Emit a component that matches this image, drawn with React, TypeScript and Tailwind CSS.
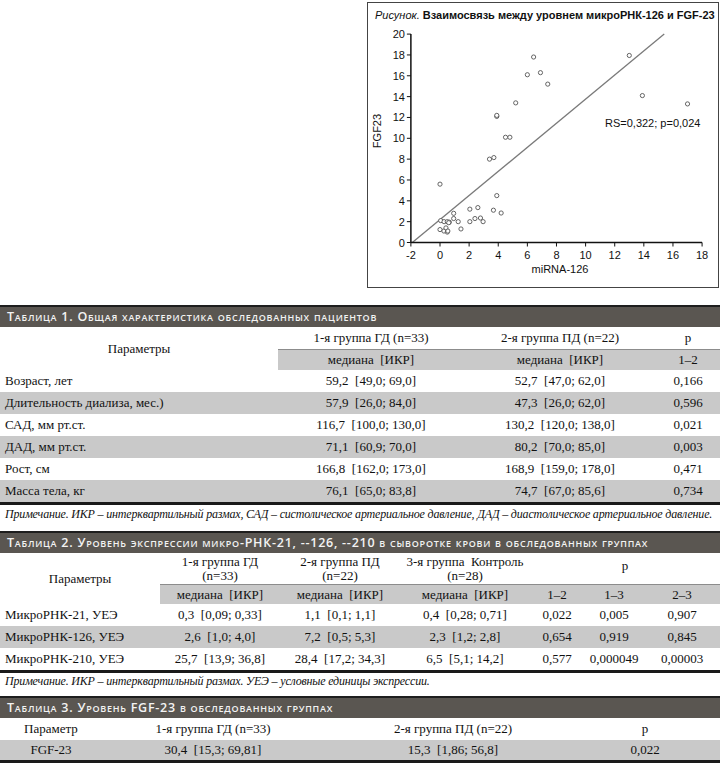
import React from "react";

const sx = (v: number) => 440 + v * 14.56;
const sy = (v: number) => 242.5 - v * 10.42;

const points: [number, number][] = [
  [6.43, 17.8], [13, 17.95], [6.0, 16.1], [6.9, 16.3], [7.4, 15.2], [13.9, 14.1],
  [5.2, 13.4], [17.0, 13.3], [3.9, 12.1], [3.9, 12.2], [4.5, 10.1], [4.8, 10.1],
  [3.4, 8.0], [3.7, 8.15], [0.0, 5.6], [3.9, 4.5], [2.05, 3.2], [2.6, 3.35],
  [3.67, 3.1], [4.2, 2.83], [0.94, 2.8], [0.94, 2.3], [1.25, 2.0], [0.05, 2.1],
  [0.28, 2.0], [0.5, 2.0], [0.64, 1.95], [2.05, 2.0], [2.4, 2.3], [2.78, 2.35],
  [2.96, 2.0], [0.0, 1.24], [0.27, 1.1], [0.41, 1.4], [0.5, 1.0], [0.54, 1.1],
  [1.44, 1.3], [0.6, 1.9],
];

function Chart() {
  const yTicks = [0, 2, 4, 6, 8, 10, 12, 14, 16, 18, 20];
  const xTicks = [-2, 0, 2, 4, 6, 8, 10, 12, 14, 16, 18];
  return (
    <svg width={350} height={260} viewBox="368 27 350 260" className="block">
      <g fontFamily="'Liberation Sans', Arial, sans-serif" fontSize={11} fill="#111">
        <line x1={sx(-1.9)} y1={sy(0)} x2={sx(15.4)} y2={sy(20)} stroke="#7a7a7a" strokeWidth={1.3} />
        <line x1={sx(-2)} y1={sy(20)} x2={sx(-2)} y2={sy(0)} stroke="#111" strokeWidth={1.5} />
        <line x1={sx(-2)} y1={sy(0)} x2={sx(18)} y2={sy(0)} stroke="#111" strokeWidth={1.5} />
        {yTicks.map((t) => (
          <g key={"y" + t}>
            <line x1={sx(-2) - 4} y1={sy(t)} x2={sx(-2)} y2={sy(t)} stroke="#111" strokeWidth={1} />
            <text x={sx(-2) - 6} y={sy(t) + 4} textAnchor="end">{t}</text>
          </g>
        ))}
        {xTicks.map((t) => (
          <g key={"x" + t}>
            <line x1={sx(t)} y1={sy(0)} x2={sx(t)} y2={sy(0) + 4} stroke="#111" strokeWidth={1} />
            <text x={sx(t)} y={sy(0) + 16} textAnchor="middle">{t}</text>
          </g>
        ))}
        <text x={560} y={273} textAnchor="middle">miRNA-126</text>
        <text x={381} y={131} textAnchor="middle" transform="rotate(-90 381 131)">FGF23</text>
        <text x={605} y={127}>RS=0,322; p=0,024</text>
        {points.map(([x, y], i) => (
          <circle key={i} cx={sx(x)} cy={sy(y)} r={2.1} fill="#fff" stroke="#555" strokeWidth={0.9} />
        ))}
      </g>
    </svg>
  );
}

function Bar({ children }: { children: React.ReactNode }) {
  return (
    <div className="h-[22px] bg-[#5a5651] border-t-2 border-[#1e1e1e] flex items-center pl-[7px] text-[#f3f3f3] text-[12.5px] font-semibold tracking-[0.06em] [font-variant:small-caps] font-['Open_Sans',sans-serif] leading-none whitespace-nowrap">
      {children}
    </div>
  );
}

const serif = "font-['Liberation_Serif',serif] text-[13px] text-[#111]";
const gray = "bg-[#c9c9c9]";
const note = "pl-[5px] italic text-[12px] tracking-[-0.015em] leading-[14px] whitespace-nowrap";

const t1cols = "grid grid-cols-[278px_186px_192px_64px]";
const t1rows: [string, string, string, string][] = [
  ["Возраст, лет", "59,2  [49,0; 69,0]", "52,7  [47,0; 62,0]", "0,166"],
  ["Длительность диализа, мес.)", "57,9  [26,0; 84,0]", "47,3  [26,0; 62,0]", "0,596"],
  ["САД, мм рт.ст.", "116,7  [100,0; 130,0]", "130,2  [120,0; 138,0]", "0,021"],
  ["ДАД, мм рт.ст.", "71,1  [60,9; 70,0]", "80,2  [70,0; 85,0]", "0,003"],
  ["Рост, см", "166,8  [162,0; 173,0]", "168,9  [159,0; 178,0]", "0,471"],
  ["Масса тела, кг", "76,1  [65,0; 83,8]", "74,7  [67,0; 85,6]", "0,734"],
];

const t2cols = "grid grid-cols-[160px_120px_120px_130px_54px_60px_76px]";
const t2rows: string[][] = [
  ["МикроРНК-21, УЕЭ", "0,3  [0,09; 0,33]", "1,1  [0,1; 1,1]", "0,4  [0,28; 0,71]", "0,022", "0,005", "0,907"],
  ["МикроРНК-126, УЕЭ", "2,6  [1,0; 4,0]", "7,2  [0,5; 5,3]", "2,3  [1,2; 2,8]", "0,654", "0,919", "0,845"],
  ["МикроРНК-210, УЕЭ", "25,7  [13,9; 36,8]", "28,4  [17,2; 34,3]", "6,5  [5,1; 14,2]", "0,577", "0,000049", "0,00003"],
];

const t3cols = "grid grid-cols-[102px_222px_258px_126px_12px]";

export default function App() {
  return (
    <div className={"w-[720px] h-[765px] bg-white overflow-hidden " + serif}>
      <div className="flex justify-end pr-[1px] pt-[2px]">
        <div className="w-[352px] h-[286px] border border-[#444] flex flex-col">
          <div className="h-[24px] pl-[7px] flex items-center text-[11px] text-[#111] font-['Liberation_Sans',sans-serif] whitespace-nowrap">
            <span className="italic">Рисунок.</span>
            <span className="font-bold ml-[3px]">Взаимосвязь между уровнем микроРНК-126 и FGF-23</span>
          </div>
          <Chart />
        </div>
      </div>

      {/* Table 1 */}
      <div className="mt-[17px]">
        <Bar>Таблица 1. Общая характеристика обследованных пациентов</Bar>
        <div className={t1cols}>
          <div className="row-span-2 flex items-center justify-center">Параметры</div>
          <div className="h-[22px] flex items-center justify-center">1-я группа ГД (n=33)</div>
          <div className="h-[22px] flex items-center justify-center">2-я группа ПД (n=22)</div>
          <div className="h-[22px] flex items-center justify-center">р</div>
          <div className={"h-[21px] flex items-center justify-center whitespace-pre border-t border-[#8c8c8c] " + gray}>медиана  [ИКР]</div>
          <div className={"h-[21px] flex items-center justify-center whitespace-pre border-t border-[#8c8c8c] " + gray}>медиана  [ИКР]</div>
          <div className={"h-[21px] flex items-center justify-center border-t border-[#8c8c8c] " + gray}>1–2</div>
        </div>
        {t1rows.map((r, i) => (
          <div key={i} className={t1cols + " h-[22px] items-center " + (i % 2 === 1 ? gray : "")}>
            <div className="pl-[5px] whitespace-nowrap">{r[0]}</div>
            <div className="text-center whitespace-pre">{r[1]}</div>
            <div className="text-center whitespace-pre">{r[2]}</div>
            <div className="text-center">{r[3]}</div>
          </div>
        ))}
        <div className="h-[3px] bg-[#1a1a1a]" />
        <div className={note + " pt-[2px]"}>
          Примечание. ИКР – интерквартильный размах, САД – систолическое артериальное давление, ДАД – диастолическое артериальное давление.
        </div>
      </div>

      {/* Table 2 */}
      <div className="mt-[10px]">
        <Bar>Таблица 2. Уровень экспрессии микро-РНК-21, --126, --210 в сыворотке крови в обследованных группах</Bar>
        <div className={t2cols}>
          <div className="row-span-2 flex items-center justify-center">Параметры</div>
          <div className="h-[31px] flex flex-col items-center justify-center leading-[14px]">
            <span>1-я группа ГД</span>
            <span>(n=33)</span>
          </div>
          <div className="h-[31px] flex flex-col items-center justify-center leading-[14px]">
            <span>2-я группа ПД</span>
            <span>(n=22)</span>
          </div>
          <div className="h-[31px] flex flex-col items-center justify-center leading-[14px]">
            <span className="whitespace-pre">3-я группа  Контроль</span>
            <span>(n=28)</span>
          </div>
          <div className="col-span-3 h-[31px] flex items-center justify-center pb-[6px]">р</div>
          {["медиана  [ИКР]", "медиана  [ИКР]", "медиана  [ИКР]", "1–2", "1–3", "2–3"].map((s, i) => (
            <div key={i} className={"h-[20px] flex items-center justify-center whitespace-pre border-t border-[#8c8c8c] " + gray}>{s}</div>
          ))}
        </div>
        {t2rows.map((r, i) => (
          <div key={i} className={t2cols + " h-[22px] items-center " + (i === 1 ? gray : "")}>
            <div className="pl-[5px] whitespace-nowrap">{r[0]}</div>
            {r.slice(1).map((c, j) => (
              <div key={j} className="text-center whitespace-pre">{c}</div>
            ))}
          </div>
        ))}
        <div className="h-[3px] bg-[#1a1a1a]" />
        <div className={note + " pt-[1px]"}>
          Примечание. ИКР – интерквартильный размах. УЕЭ – условные единицы экспрессии.
        </div>
      </div>

      {/* Table 3 */}
      <div className="mt-[8px]">
        <Bar>Таблица 3. Уровень FGF-23 в обследованных группах</Bar>
        <div className={t3cols + " h-[22px] items-center"}>
          <div className="text-center">Параметр</div>
          <div className="text-center">1-я группа ГД (n=33)</div>
          <div className="text-center">2-я группа ПД (n=22)</div>
          <div className="text-center">р</div>
          <div />
        </div>
        <div className={t3cols + " h-[20px] items-center " + gray}>
          <div className="text-center">FGF-23</div>
          <div className="text-center whitespace-pre">30,4  [15,3; 69,81]</div>
          <div className="text-center whitespace-pre">15,3  [1,86; 56,8]</div>
          <div className="text-center">0,022</div>
          <div />
        </div>
        <div className="h-[3px] bg-[#1a1a1a]" />
      </div>
    </div>
  );
}
